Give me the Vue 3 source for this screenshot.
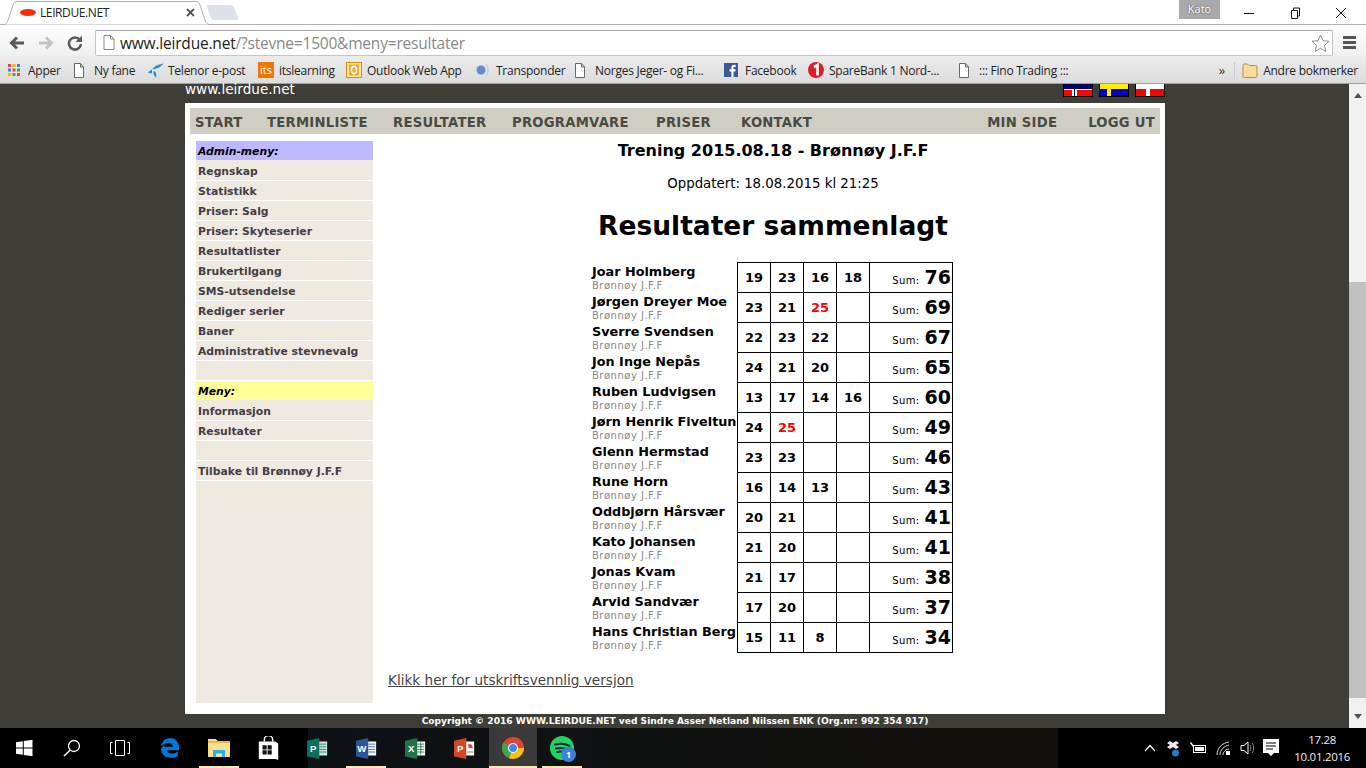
<script setup>
const bookmarks = [
  { icon: 'apps', label: 'Apper', width: 66 },
  { icon: 'doc', label: 'Ny fane', width: 74 },
  { icon: 'telenor', label: 'Telenor e-post', width: 111 },
  { icon: 'its', label: 'itslearning', width: 88 },
  { icon: 'outlook', label: 'Outlook Web App', width: 129 },
  { icon: 'transponder', label: 'Transponder', width: 99 },
  { icon: 'doc', label: 'Norges Jeger- og Fi...', width: 150 },
  { icon: 'facebook', label: 'Facebook', width: 84 },
  { icon: 'sparebank', label: 'SpareBank 1 Nord-...', width: 150 },
  { icon: 'doc', label: '::: Fino Trading :::', width: 120 },
]

const navLeft = [
  { label: 'START', width: 72 },
  { label: 'TERMINLISTE', width: 126 },
  { label: 'RESULTATER', width: 119 },
  { label: 'PROGRAMVARE', width: 144 },
  { label: 'PRISER', width: 85 },
  { label: 'KONTAKT', width: 100 },
]

const adminMenu = [
  'Regnskap', 'Statistikk', 'Priser: Salg', 'Priser: Skyteserier', 'Resultatlister',
  'Brukertilgang', 'SMS-utsendelse', 'Rediger serier', 'Baner', 'Administrative stevnevalg',
]

const results = [
  { name: 'Joar Holmberg', scores: [19, 23, 16, 18], sum: 76 },
  { name: 'Jørgen Dreyer Moe', scores: [23, 21, 25], sum: 69 },
  { name: 'Sverre Svendsen', scores: [22, 23, 22], sum: 67 },
  { name: 'Jon Inge Nepås', scores: [24, 21, 20], sum: 65 },
  { name: 'Ruben Ludvigsen', scores: [13, 17, 14, 16], sum: 60 },
  { name: 'Jørn Henrik Fiveltun', scores: [24, 25], sum: 49 },
  { name: 'Glenn Hermstad', scores: [23, 23], sum: 46 },
  { name: 'Rune Horn', scores: [16, 14, 13], sum: 43 },
  { name: 'Oddbjørn Hårsvær', scores: [20, 21], sum: 41 },
  { name: 'Kato Johansen', scores: [21, 20], sum: 41 },
  { name: 'Jonas Kvam', scores: [21, 17], sum: 38 },
  { name: 'Arvid Sandvær', scores: [17, 20], sum: 37 },
  { name: 'Hans Christian Berg', scores: [15, 11, 8], sum: 34 },
]

const taskApps = ['edge', 'explorer', 'store', 'publisher', 'word', 'excel', 'powerpoint', 'chrome', 'spotify']
const openApps = ['explorer', 'word', 'spotify']
</script>

<template>
  <div class="screen">
    <!-- nettleser -->
    <div class="tabstrip">
      <div class="tab">
        <svg class="tab-shape" width="211" height="25" viewBox="0 0 211 25">
          <path d="M0 24.500H3C6 24.500 7 23 8 20L13 5C14 2 15 1.500 18 1.500H195C198 1.500 199 2 200 5L205 20C206 23 207 24.500 211 24.500" fill="#fff" stroke="#b0b0b0" />
        </svg>
        <svg class="tab-icon" width="16" height="7" viewBox="0 0 16 7"><ellipse cx="8" cy="3.500" rx="8" ry="3.500" fill="#f82c04" /></svg>
        <span class="tab-title">LEIRDUE.NET</span>
        <svg class="tab-close" width="9" height="9" viewBox="0 0 9 9"><path d="M1 1l7 7M8 1L1 8" stroke="#555" stroke-width="1.800" /></svg>
      </div>
      <div class="newtab"></div>
      <div class="profile">Kato</div>
      <div class="winbtns">
        <svg width="12" height="12" viewBox="0 0 12 12"><path d="M1 6.500h10" stroke="#111" /></svg>
        <svg width="12" height="12" viewBox="0 0 12 12"><path d="M2.500 3.500h6v8h-6zM4.500 3.500v-2.500h6v8h-2" fill="none" stroke="#111" /></svg>
        <svg width="12" height="12" viewBox="0 0 12 12"><path d="M1 1l10 10M11 1L1 11" stroke="#111" /></svg>
      </div>
    </div>

    <div class="toolbar">
      <svg class="tool" width="16" height="14" viewBox="0 0 16 14"><path d="M15 7H3M8 1.500L2.500 7 8 12.500" fill="none" stroke="#5a5a5a" stroke-width="3" /></svg>
      <svg class="tool" width="16" height="14" viewBox="0 0 16 14"><path d="M1 7h12M8 1.500L13.500 7 8 12.500" fill="none" stroke="#c4c4c4" stroke-width="3" /></svg>
      <svg class="tool" width="16" height="16" viewBox="0 0 16 16"><path d="M13 5.200A6 6 0 1 0 14 9" fill="none" stroke="#5a5a5a" stroke-width="2.600" /><path d="M15 0.500v6.500H8.500z" fill="#5a5a5a" /></svg>
      <div class="omnibox">
        <svg width="12" height="15" viewBox="0 0 12 15"><path d="M1 .5h6.500l3.500 3.500v10.500H1zM7.500 .5V4H11" fill="#fff" stroke="#8a8a8a" /></svg>
        <span class="url"><span class="url-host">www.leirdue.net</span>/?stevne=1500&amp;meny=resultater</span>
        <svg class="star" width="19" height="18" viewBox="0 0 19 18"><path d="M9.500 1l2.500 5.600 6 .7-4.500 4.100 1.300 6-5.300-3.100-5.300 3.100 1.300-6L1 7.300l6-.7z" fill="#fff" stroke="#8e8e8e" /></svg>
      </div>
      <div class="hamburger"><i></i><i></i><i></i></div>
    </div>

    <div class="bookmarks">
      <div v-for="b in bookmarks" :key="b.label" class="bookmark" :style="{ width: b.width + 'px' }">
        <span class="bm-icon">
          <svg v-if="b.icon === 'apps'" width="14" height="14" viewBox="0 0 14 14">
            <rect x="1" y="1" width="3" height="3" fill="#e8453c" /><rect x="5.500" y="1" width="3" height="3" fill="#f4b400" /><rect x="10" y="1" width="3" height="3" fill="#3b7de8" />
            <rect x="1" y="5.500" width="3" height="3" fill="#3b7de8" /><rect x="5.500" y="5.500" width="3" height="3" fill="#e8453c" /><rect x="10" y="5.500" width="3" height="3" fill="#34a853" />
            <rect x="1" y="10" width="3" height="3" fill="#f4b400" /><rect x="5.500" y="10" width="3" height="3" fill="#34a853" /><rect x="10" y="10" width="3" height="3" fill="#e8453c" />
          </svg>
          <svg v-else-if="b.icon === 'doc'" width="12" height="15" viewBox="0 0 12 15"><path d="M1.500 .5h6l3 3.500v10.500h-9zM7.500 .5V4h3" fill="#fff" stroke="#666" /></svg>
          <svg v-else-if="b.icon === 'telenor'" width="17" height="15" viewBox="0 0 17 15"><path d="M16.500 .5C11 1.500 6.500 3.500 5.500 6.500 9.500 6 14 4 16.500 .5zM5 6.500L.5 9.500l4.500 1zM7 7.500C6 10 6.500 12.500 9 14.500c.8-2.500.3-5-2-7z" fill="#1793d8" /></svg>
          <span v-else-if="b.icon === 'its'" class="its">its</span>
          <svg v-else-if="b.icon === 'outlook'" width="16" height="16" viewBox="0 0 16 16"><rect x=".5" y=".5" width="15" height="15" fill="#fbe9a8" stroke="#d98a10" /><rect x="3" y="2.500" width="10" height="11" fill="#f0a818" /><ellipse cx="8" cy="8" rx="2.600" ry="3.600" fill="none" stroke="#fff" stroke-width="1.600" /></svg>
          <svg v-else-if="b.icon === 'transponder'" width="16" height="16" viewBox="0 0 16 16"><circle cx="6" cy="8" r="4.500" fill="#5f8fcf" /><path d="M11.500 2.500c2 3.500 2 7.500 0 11" fill="none" stroke="#bcd2ea" stroke-width="1.500" /></svg>
          <svg v-else-if="b.icon === 'facebook'" width="14" height="14" viewBox="0 0 14 14"><rect width="14" height="14" fill="#3b5998" /><path d="M9.500 14V8.500h1.800l.3-2.200H9.500V5c0-.7.200-1.100 1.100-1.100h1.100v-2c-.3 0-.9-.1-1.600-.1-1.600 0-2.700 1-2.700 2.800v1.700H5.500v2.200h1.900V14z" fill="#fff" /></svg>
          <svg v-else-if="b.icon === 'sparebank'" width="16" height="16" viewBox="0 0 16 16"><circle cx="8" cy="8" r="8" fill="#d8202a" /><path d="M6 5l3.500-2v10.500" fill="none" stroke="#fff" stroke-width="2.600" /></svg>
        </span>
        <span class="bm-label">{{ b.label }}</span>
      </div>
      <span class="bm-more">»</span>
      <div class="bm-other">
        <svg width="16" height="15" viewBox="0 0 16 15"><path d="M1 2.500C1 1.500 1.500 1 2.500 1h3L7 2.500h6.500c1 0 1.500.5 1.500 1.500v9c0 1-.5 1.500-1.500 1.500h-11C1.500 14.500 1 14 1 13z" fill="#f9dc9a" stroke="#b88a4a" /></svg>
        <span class="bm-label">Andre bokmerker</span>
      </div>
    </div>

    <!-- siden -->
    <div class="viewport">
      <div class="page">
        <div class="site-top">
          <span class="site-name">www.leirdue.net</span>
          <div class="flags">
            <svg width="30" height="13" viewBox="0 0 30 13">
              <rect width="30" height="13" fill="#000" /><rect x="1" width="28" height="12" fill="#f00" /><rect x="1" width="28" height="5" fill="#00005e" />
              <rect x="1" y="5" width="28" height="1" fill="#fff" /><rect x="9" y="5" width="5" height="7" fill="#fff" /><rect x="11" y="5" width="1" height="7" fill="#00005e" />
            </svg>
            <svg width="30" height="13" viewBox="0 0 30 13">
              <rect width="30" height="13" fill="#000" /><rect x="1" width="28" height="12" fill="#0000c0" /><rect x="1" width="28" height="5" fill="#ffee00" /><rect x="8" y="5" width="4" height="7" fill="#ffee00" />
            </svg>
            <svg width="30" height="13" viewBox="0 0 30 13">
              <rect width="30" height="13" fill="#000" /><rect x="1" width="28" height="12" fill="#f00" /><rect x="1" width="28" height="5" fill="#fff" /><rect x="11" y="5" width="4" height="7" fill="#fff" />
            </svg>
          </div>
        </div>

        <div class="sheet">
          <nav class="nav">
            <a v-for="n in navLeft" :key="n.label" :style="{ width: n.width + 'px' }">{{ n.label }}</a>
            <a class="min-side">MIN SIDE</a>
            <a class="logout">LOGG UT</a>
          </nav>

          <div class="columns">
            <aside class="sidebar">
              <div class="side-head admin">Admin-meny:</div>
              <div v-for="m in adminMenu" :key="m" class="side-item">{{ m }}</div>
              <div class="side-item"></div>
              <div class="side-head user">Meny:</div>
              <div class="side-item">Informasjon</div>
              <div class="side-item">Resultater</div>
              <div class="side-item"></div>
              <div class="side-item">Tilbake til Brønnøy J.F.F</div>
            </aside>

            <main class="content">
              <h2 class="event">Trening 2015.08.18 - Brønnøy J.F.F</h2>
              <p class="updated">Oppdatert: 18.08.2015 kl 21:25</p>
              <h1 class="heading">Resultater sammenlagt</h1>
              <table class="results">
                <tr v-for="r in results" :key="r.name">
                  <td class="who">
                    <div class="who-name">{{ r.name }}</div>
                    <div class="who-club">Brønnøy J.F.F</div>
                  </td>
                  <td v-for="i in 4" :key="i" class="score" :class="{ best: r.scores[i - 1] === 25 }">{{ r.scores[i - 1] }}</td>
                  <td class="sum"><span class="sum-label">Sum:</span><span class="sum-value">{{ r.sum }}</span></td>
                </tr>
              </table>
              <a class="print-link">Klikk her for utskriftsvennlig versjon</a>
            </main>
          </div>
        </div>

        <div class="copyright">Copyright © 2016 WWW.LEIRDUE.NET ved Sindre Asser Netland Nilssen ENK (Org.nr: 992 354 917)</div>
      </div>

      <div class="scrollbar">
        <span class="arrow up"></span>
        <div class="thumb"></div>
        <span class="arrow down"></span>
      </div>
    </div>

    <!-- oppgavelinje -->
    <div class="taskbar">
      <div class="task-sys">
        <svg width="18" height="18" viewBox="0 0 18 18"><path d="M1 3.200l6.800-1v6.300H1zM8.800 2l8.700-1.300v7.800H8.800zM1 9.500h6.800v6.300l-6.800-1zM8.800 9.500h8.700v7.800l-8.700-1.300z" fill="#fff" /></svg>
      </div>
      <div class="task-sys">
        <svg width="18" height="18" viewBox="0 0 18 18"><circle cx="11" cy="7" r="5.500" fill="none" stroke="#fff" stroke-width="1.300" /><path d="M7 11.200L1 17" stroke="#fff" stroke-width="1.500" /></svg>
      </div>
      <div class="task-sys">
        <svg width="20" height="16" viewBox="0 0 20 16"><path d="M5.500 .5h9v15h-9zM2.500 2.500H.5v11h2M17.500 2.500h2v11h-2" fill="none" stroke="#fff" /></svg>
      </div>
      <div class="task-apps">
        <div v-for="app in taskApps" :key="app" class="task-app" :class="{ open: openApps.includes(app), active: app === 'chrome' }">
          <svg v-if="app === 'edge'" width="20" height="22" viewBox="0 0 22 24"><path d="M1 12C1 5 6 1 11.500 1 17 1 21 5 21 12.500v2H7.500c.3 3.500 5.500 5 12 1.500v5c-6 3-17 3-18.500-7 .8-3 3-5 5-6-1 1-1.500 2-1.500 2.500H14c0-4-5.500-6-13-.5z" fill="#0078d7" /></svg>
          <svg v-else-if="app === 'explorer'" width="22" height="18" viewBox="0 0 22 18"><path d="M0 0h8l1.500 2H22v16H0z" fill="#f8e08e" /><path d="M0 2h22v2H0z" fill="#e6b94e" /><path d="M5 18v-7h12v7h-3v-3.500H8V18z" fill="#25b4e8" /></svg>
          <svg v-else-if="app === 'store'" width="21" height="24" viewBox="0 0 21 26"><path d="M6 6V4a4 4 0 0 1 9 0v2" fill="none" stroke="#fff" stroke-width="1.600" /><path d="M0 6h18l3 2v18l-3-1H0z" fill="#fff" /><path d="M4 10h4.500v4.500H4zM9.500 10H14v4.500H9.500zM4 15.500h4.500V20H4zM9.500 15.500H14V20H9.500z" fill="#111" /></svg>
          <svg v-else-if="app === 'publisher'" width="23" height="21" viewBox="0 0 24 24"><path d="M13 4h10v16H13z" fill="#cfe6dd" /><path d="M14 7h8M14 10h8M14 13h8M14 16h8" stroke="#1a7a62" /><path d="M0 3l14-3v24L0 21z" fill="#0f6f5c" /><text x="3.500" y="16" class="app-letter">P</text></svg>
          <svg v-else-if="app === 'word'" width="23" height="21" viewBox="0 0 24 24"><path d="M13 4h10v16H13z" fill="#fff" /><path d="M14 7h8M14 10h8M14 13h8M14 16h8" stroke="#2b579a" /><path d="M0 3l14-3v24L0 21z" fill="#2b579a" /><text x="1.500" y="16" class="app-letter">W</text></svg>
          <svg v-else-if="app === 'excel'" width="23" height="21" viewBox="0 0 24 24"><path d="M13 4h10v16H13z" fill="#fff" /><path d="M14 7h8M14 10h8M14 13h8M14 16h8M18 5v14" stroke="#217346" /><path d="M0 3l14-3v24L0 21z" fill="#217346" /><text x="3.500" y="16" class="app-letter">X</text></svg>
          <svg v-else-if="app === 'powerpoint'" width="23" height="21" viewBox="0 0 24 24"><path d="M13 4h10v16H13z" fill="#fff" /><path d="M17 7a4 4 0 0 1 4 4h-4zM15 16h7" stroke="#d24726" fill="#d24726" /><path d="M0 3l14-3v24L0 21z" fill="#d24726" /><text x="3.500" y="16" class="app-letter">P</text></svg>
          <svg v-else-if="app === 'chrome'" width="22" height="22" viewBox="0 0 24 24"><circle cx="12" cy="12" r="12" fill="#db4437" /><path d="M12 12L1.600 6a12 12 0 0 0 6 17.100z" fill="#34a853" /><path d="M12 12h12a12 12 0 0 1-16.400 11.100z" fill="#f4c20d" /><circle cx="12" cy="12" r="5.500" fill="#fff" /><circle cx="12" cy="12" r="4.300" fill="#4285f4" /></svg>
          <span v-else-if="app === 'spotify'" class="spotify">
            <svg width="24" height="24" viewBox="0 0 24 24"><circle cx="12" cy="12" r="12" fill="#1ed760" /><path d="M5 8.500c5-1.300 10-1 14.500 1.300M6 12.500c4-1 8.500-.7 12 1.200M7 16c3.500-.8 7-.5 10 1" fill="none" stroke="#124" stroke-width="2" stroke-linecap="round" /></svg>
            <span class="spotify-badge">1</span>
          </span>
        </div>
      </div>
      <div class="tray">
        <svg width="12" height="8" viewBox="0 0 12 8"><path d="M1 7l5-5.500L11 7" fill="none" stroke="#fff" stroke-width="1.200" /></svg>
        <svg width="14" height="17" viewBox="0 0 14 17"><path d="M1 3l3-2 3 2 3-2 3 2-3 2 3 2-3 2-3-2-3 2-3-2 3-2z" fill="#eee" /><circle cx="9.500" cy="13" r="3.500" fill="#1f7ad0" /></svg>
        <svg width="16" height="12" viewBox="0 0 16 12"><rect x="3.500" y="3.500" width="12" height="7" fill="none" stroke="#fff" /><rect x="5" y="5" width="9" height="4" fill="#fff" /><path d="M1 0l3 4-1 1L0 1z" fill="#fff" /></svg>
        <svg width="14" height="14" viewBox="0 0 14 14"><path d="M1 14C1 7 6 2 13 1M4 14c0-5 4-9 9-10M7 14c0-3 3-6 6-6" fill="none" stroke="#ddd" /><rect x="10" y="10" width="4" height="4" fill="#fff" /></svg>
        <svg width="15" height="14" viewBox="0 0 15 14"><path d="M1 4.500h3L8 1v12L4 9.500H1z" fill="none" stroke="#fff" /><path d="M10 4c1 2 1 4 0 6M12.500 2c1.500 3 1.500 7 0 10" fill="none" stroke="#888" /></svg>
        <svg class="notify" width="16" height="18" viewBox="0 0 16 18"><path d="M0 0h16v14h-5l-3 3-3-3H0z" fill="#fff" /><path d="M3 4h10M3 7h10M3 10h7" stroke="#000" /></svg>
        <div class="clock"><span>17.28</span><span>10.01.2016</span></div>
      </div>
    </div>
  </div>
</template>

<style scoped>
.screen {
  width: 1366px;
  height: 768px;
  display: flex;
  flex-direction: column;
  overflow: hidden;
  font-family: "DejaVu Sans", Verdana, sans-serif;
}

.tabstrip {
  height: 24px;
  flex: none;
  display: flex;
  background: #fff;
  border-bottom: 1px solid #b0b0b0;
  box-sizing: content-box;
}

.tab {
  width: 211px;
  height: 25px;
  flex: none;
  padding: 0 16px 0 20px;
  box-sizing: border-box;
  display: flex;
  align-items: center;
  position: relative;
}

.tab-shape {
  position: absolute;
  left: 0;
  top: 0;
}

.tab-icon,
.tab-title,
.tab-close {
  position: relative;
}

.tab-icon {
  flex: none;
  margin-right: 4px;
}

.tab-title {
  flex: 1;
  font: 12px "Open Sans", sans-serif;
  letter-spacing: -0.4px;
  color: #222;
}

.newtab {
  width: 27px;
  height: 15px;
  margin: 5px 0 0 -2px;
  background: #dde2ea;
  border-radius: 2px 3px 2px 2px;
  transform: skewX(20deg);
}

.profile {
  width: 41px;
  height: 19px;
  margin-left: auto;
  background: #aaa;
  color: #fff;
  font: 11px/18px "Open Sans", sans-serif;
  text-align: center;
  text-shadow: 0 0 2px #444;
}

.winbtns {
  display: flex;
  align-items: flex-start;
  gap: 34px;
  padding: 7px 19px 0 23px;
}

.toolbar {
  height: 31px;
  flex: none;
  display: flex;
  align-items: center;
  padding-top: 4px;
  box-sizing: border-box;
  background: linear-gradient(#fdfdfd, #f0f0f0);
}

.tool {
  flex: none;
  margin-left: 13px;
}

.toolbar .tool:first-child {
  margin-left: 9px;
}

.omnibox {
  width: 1238px;
  height: 26px;
  margin-left: 12px;
  padding: 0 2px 0 7px;
  box-sizing: border-box;
  display: flex;
  align-items: center;
  background: #fff;
  border: 1px solid #c4c4c4;
  border-top-color: #a6a6a6;
  border-radius: 2px;
}

.url {
  margin-left: 5px;
  font: 15.500px "Open Sans", sans-serif;
  letter-spacing: -0.2px;
  color: #888;
}

.url-host {
  color: #222;
}

.star {
  margin-left: auto;
}

.hamburger {
  width: 13px;
  margin-left: 10px;
  display: flex;
  flex-direction: column;
  gap: 2px;
}

.hamburger i {
  height: 3px;
  background: #555;
}

.bookmarks {
  height: 28px;
  flex: none;
  display: flex;
  align-items: center;
  padding: 1px 0 0 7px;
  box-sizing: border-box;
  background: linear-gradient(#ececec, #dcdcdc);
  border-bottom: 1px solid #a0a0a0;
}

.bookmark {
  flex: none;
  display: flex;
  align-items: center;
}

.bm-icon {
  width: 21px;
  flex: none;
  display: flex;
}

.bm-label {
  font: 12px "Open Sans", sans-serif;
  letter-spacing: -0.25px;
  white-space: nowrap;
  color: #222;
}

.its {
  width: 16px;
  height: 16px;
  background: #f07400;
  color: #fff;
  font: 11px/16px "Open Sans", sans-serif;
  text-align: center;
}

.bm-more {
  margin-left: auto;
  font: 13px "Open Sans", sans-serif;
  color: #333;
}

.bm-other {
  display: flex;
  align-items: center;
  gap: 5px;
  margin-left: 9px;
  padding-left: 7px;
  padding-right: 8px;
  border-left: 1px solid #ccc;
}

.viewport {
  flex: 1;
  min-height: 0;
  display: flex;
  background: #3f3d38;
}

.page {
  width: 980px;
  margin-left: 185px;
  display: flex;
  flex-direction: column;
}

.site-top {
  height: 19px;
  flex: none;
  display: flex;
  justify-content: space-between;
}

.site-name {
  font-size: 13.600px;
  line-height: 11px;
  color: #fff;
}

.flags {
  display: flex;
  gap: 6px;
  height: 13px;
}

.sheet {
  height: 611px;
  flex: none;
  padding: 5px 5px 0;
  box-sizing: border-box;
  background: #fff;
}

.nav {
  height: 26px;
  display: flex;
  align-items: center;
  padding: 2px 5px 0;
  box-sizing: border-box;
  background: #d0cec2;
}

.nav a {
  flex: none;
  font-size: 13.200px;
  font-weight: bold;
  letter-spacing: 0.25px;
  color: #4a4a44;
  white-space: nowrap;
}

.nav .min-side {
  margin-left: auto;
  margin-right: 31px;
}

.columns {
  display: flex;
  margin-top: 7px;
}

.sidebar {
  width: 177px;
  height: 562px;
  margin-left: 6px;
  flex: none;
  background: #eeeae0;
}

.side-head,
.side-item {
  height: 19px;
  margin-bottom: 1px;
  padding-left: 2px;
  font-size: 10.800px;
  font-weight: bold;
  line-height: 22px;
}

.side-item {
  color: #443d45;
  border-bottom: 1px solid #fff;
  margin-bottom: 0;
  white-space: nowrap;
}

.side-head {
  font-style: italic;
  color: #000;
}

.admin {
  background: #bdb8ff;
}

.user {
  background: #ffff99;
}

.content {
  flex: 1;
  min-width: 0;
  padding-left: 13px;
  display: flex;
  flex-direction: column;
  align-items: center;
}

.event {
  margin: 0;
  font-size: 16px;
  line-height: 20px;
  color: #000;
}

.updated {
  margin: 14px 0 0;
  font-size: 13.330px;
  line-height: 18px;
  color: #000;
}

.heading {
  margin: 13px 0 0;
  font-size: 26.500px;
  line-height: 40px;
  color: #000;
}

.results {
  align-self: flex-start;
  margin: 16px 0 0 206px;
  border-collapse: collapse;
  color: #000;
}

.results td {
  height: 29px;
  padding: 0;
}

.results td.who {
  width: 145px;
  height: 28px;
  padding-top: 1px;
  white-space: nowrap;
  vertical-align: top;
}

.who-name {
  font-size: 12.800px;
  font-weight: bold;
  line-height: 15px;
}

.who-club {
  height: 12px;
  font-size: 10px;
  letter-spacing: 0.5px;
  line-height: 14px;
  color: #888;
}

.score,
.sum {
  border: 1px solid #000;
}

.score {
  width: 32px;
  text-align: center;
  font-size: 13px;
  font-weight: bold;
}

.best {
  color: #f00;
}

.results td.sum {
  width: 82px;
  height: 28px;
  padding-bottom: 1px;
  text-align: right;
  white-space: nowrap;
}

.sum-label {
  font-size: 10px;
  letter-spacing: 0.4px;
  margin-right: 5px;
}

.sum-value {
  font-size: 19px;
  font-weight: bold;
  padding-right: 1px;
}

.print-link {
  align-self: flex-start;
  margin: 19px 0 0 2px;
  font-size: 13.600px;
  color: #444;
  text-decoration: underline;
}

.copyright {
  height: 14px;
  flex: none;
  font-size: 9.100px;
  font-weight: bold;
  line-height: 14px;
  text-align: center;
  color: #fff;
  white-space: nowrap;
}

.scrollbar {
  width: 17px;
  margin-left: auto;
  background: #f1f1f1;
  position: relative;
}

.thumb {
  position: absolute;
  top: 198px;
  left: 0;
  right: 0;
  height: 416px;
  background: #c1c1c1;
}

.arrow {
  position: absolute;
  left: 5px;
  border: 4px solid transparent;
}

.arrow.up {
  top: 5px;
  border-bottom: 5px solid #505050;
}

.arrow.down {
  bottom: 5px;
  border-top: 5px solid #505050;
}

.taskbar {
  height: 40px;
  flex: none;
  display: flex;
  background: linear-gradient(90deg, #000 308px, #0e1216 308px, #12100c 1058px, #000 1058px);
}

.task-sys {
  width: 48px;
  flex: none;
  display: flex;
  align-items: center;
  justify-content: center;
}

.task-apps {
  display: flex;
  gap: 1px;
  margin-left: 2px;
}

.task-app {
  width: 48px;
  display: flex;
  align-items: center;
  justify-content: center;
  position: relative;
}

.task-app.active {
  background: #3a3a3a;
}

.task-app.open::after,
.task-app.active::after {
  content: '';
  position: absolute;
  left: 4px;
  right: 4px;
  bottom: 0;
  height: 2px;
  background: #fde6b0;
}

.task-app.active::after {
  left: 0;
  right: 0;
}

.app-letter {
  font: bold 11px "Liberation Sans", sans-serif;
  fill: #fff;
}

.spotify {
  position: relative;
  display: flex;
}

.spotify-badge {
  position: absolute;
  left: 11px;
  top: 11px;
  width: 15px;
  height: 15px;
  border-radius: 50%;
  background: #3f7fd6;
  color: #fff;
  font: bold 9px/15px "Open Sans", sans-serif;
  text-align: center;
}

.tray {
  margin-left: auto;
  display: flex;
  align-items: center;
  gap: 10px;
  padding-right: 16px;
}

.notify {
  margin-left: -2px;
}

.clock {
  margin-left: 5px;
  display: flex;
  flex-direction: column;
  align-items: center;
  font: 11.500px/17px "Open Sans", sans-serif;
  letter-spacing: -0.3px;
  color: #eee;
}
</style>

<style>
html,
body {
  margin: 0;
  background: #3f3d38;
  overflow: hidden;
}
</style>
